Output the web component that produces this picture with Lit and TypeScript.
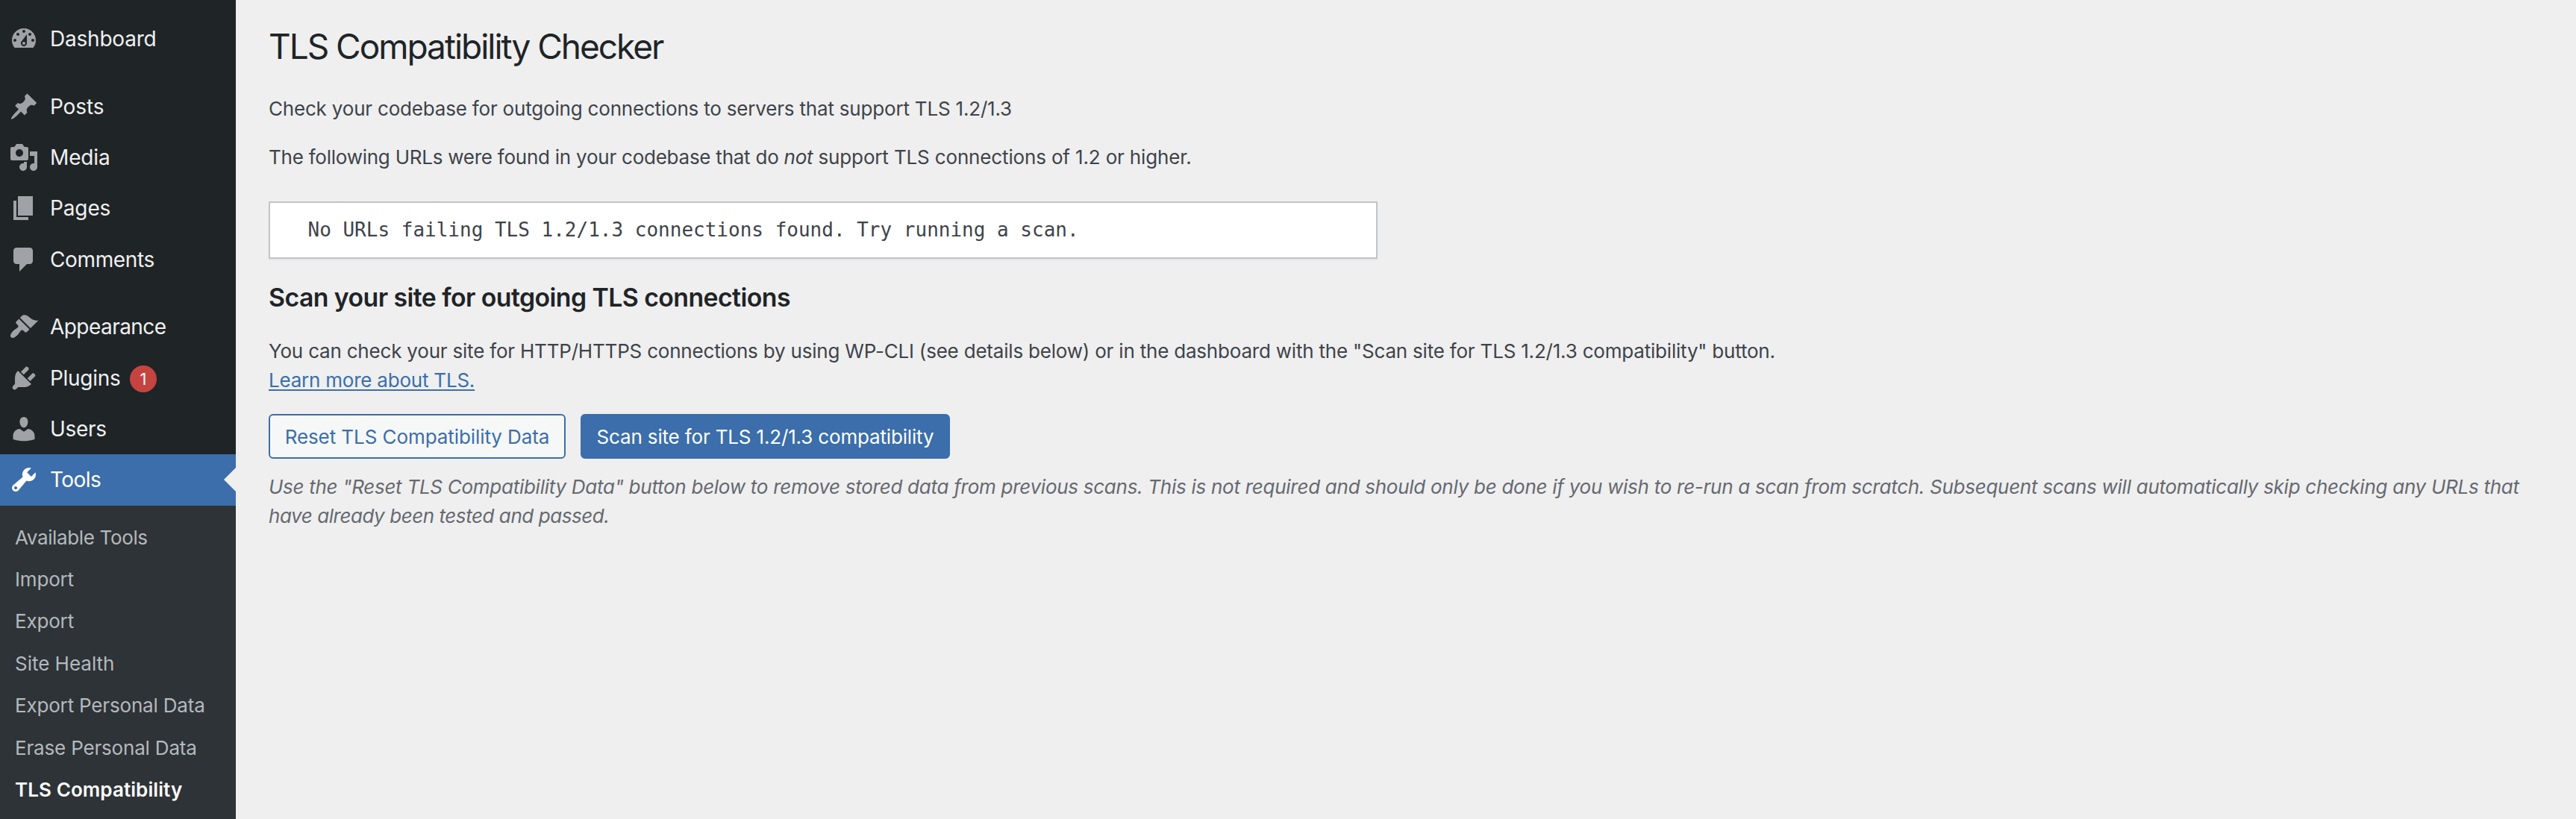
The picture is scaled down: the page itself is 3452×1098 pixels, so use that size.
import { LitElement, html, css, svg, nothing } from "lit";
import { customElement } from "lit/decorators.js";

interface MenuItem {
  label: string;
  icon: string;
  cls: string;
  count?: number;
  current?: boolean;
}

const ICONS: Record<string, string> = {
  dashboard:
    "M3.76 16h12.48c1.1-1.37 1.76-3.11 1.76-5 0-4.42-3.58-8-8-8s-8 3.58-8 8c0 1.89.66 3.63 1.76 5zM10 4c.55 0 1 .45 1 1s-.45 1-1 1-1-.45-1-1 .45-1 1-1zM6 6c.55 0 1 .45 1 1s-.45 1-1 1-1-.45-1-1 .45-1 1-1zm8 0c.55 0 1 .45 1 1s-.45 1-1 1-1-.45-1-1 .45-1 1-1zm-5.37 5.55L12 7v6c0 1.1-.9 2-2 2s-2-.9-2-2c0-.57.24-1.08.63-1.45zM4 10c.55 0 1 .45 1 1s-.45 1-1 1-1-.45-1-1 .45-1 1-1zm12 0c.55 0 1 .45 1 1s-.45 1-1 1-1-.45-1-1 .45-1 1-1zm-5 3c0-.55-.45-1-1-1s-1 .45-1 1 .45 1 1 1 1-.45 1-1z",
  post: "M10.44 3.02l1.82-1.82 6.36 6.35-1.83 1.82c-1.05-.68-2.48-.57-3.41.36l-.75.75c-.92.93-1.04 2.35-.35 3.41l-1.83 1.82-2.41-2.41-2.8 2.79c-.42.42-3.38 2.71-3.8 2.29s1.86-3.39 2.28-3.81l2.79-2.79L4.1 9.36l1.83-1.82c1.05.69 2.48.57 3.4-.36l.75-.75c.93-.92 1.05-2.35.36-3.41z",
  media:
    "M13 11V4c0-.55-.45-1-1-1h-1.67L9 1H5L3.67 3H2c-.55 0-1 .45-1 1v7c0 .55.45 1 1 1h10c.55 0 1-.45 1-1zM7 4.5c1.38 0 2.5 1.12 2.5 2.5S8.38 9.5 7 9.5 4.5 8.38 4.5 7 5.62 4.5 7 4.5zM14 6h5v10.5c0 1.38-1.12 2.5-2.5 2.5S14 17.88 14 16.5s1.12-2.5 2.5-2.5c.17 0 .34.02.5.05V9h-3V6zm-4 8.05V13h2v3.5c0 1.38-1.12 2.5-2.5 2.5S7 17.88 7 16.5 8.12 14 9.5 14c.17 0 .34.02.5.05z",
  page: "M6 15V2h10v13H6zm-1 1h8v2H3V5h2v11z",
  comments:
    "M5 2h9c1.1 0 2 .9 2 2v7c0 1.1-.9 2-2 2h-2l-5 5v-5H5c-1.1 0-2-.9-2-2V4c0-1.1.9-2 2-2z",
  appearance:
    "M14.48 11.06L7.41 3.99l1.5-1.5c.5-.56 2.3-.47 3.51.32 1.21.8 1.43 1.28 2.91 2.1 1.18.64 2.45 1.26 4.45.85zm-.71.71L6.7 4.7 4.93 6.47c-.39.39-.39 1.02 0 1.41l1.06 1.06c.39.39.39 1.03 0 1.42-.6.6-1.43 1.11-2.21 1.69-.35.26-.7.53-1.01.84C1.43 14.23.4 16.08 1.4 17.07c.99 1 2.84-.03 4.18-1.36.31-.31.58-.66.85-1.02.57-.78 1.08-1.61 1.69-2.21.39-.39 1.02-.39 1.41 0l1.06 1.06c.39.39 1.02.39 1.41 0z",
  plugins:
    "M13.11 4.36L9.87 7.6 8 5.73l3.24-3.24c.35-.34 1.05-.2 1.56.32.52.51.66 1.21.31 1.55zm-8 1.77l.91-1.12 9.01 9.01-1.19.84c-.71.71-2.63 1.16-3.82 1.16H6.14L4.9 17.26c-.59.59-1.54.59-2.12 0-.59-.58-.59-1.53 0-2.12l1.24-1.24v-3.88c0-1.13.4-3.19 1.09-3.89zm7.26 3.97l3.24-3.24c.34-.35 1.04-.21 1.55.31.52.51.66 1.21.31 1.55l-3.24 3.25z",
  users:
    "M10 9.25c-2.27 0-2.73-3.44-2.73-3.44C7 4.02 7.82 2 9.97 2c2.16 0 2.98 2.02 2.71 3.81 0 0-.41 3.44-2.68 3.44zm0 2.57L12.72 10c2.39 0 4.52 2.33 4.52 4.53v2.49s-3.65 1.13-7.24 1.13c-3.65 0-7.24-1.13-7.24-1.13v-2.49c0-2.25 1.94-4.48 4.47-4.48z",
  tools:
    "M16.68 9.77c-1.34 1.34-3.3 1.67-4.95.99l-5.41 6.52c-.99.99-2.59.99-3.58 0s-.99-2.59 0-3.57l6.52-5.42c-.68-1.65-.35-3.61.99-4.95 1.28-1.28 3.12-1.62 4.72-1.06l-2.89 2.89 2.82 2.82 2.86-2.87c.53 1.58.18 3.39-1.08 4.65zM3.81 16.21c.4.39 1.04.39 1.43 0 .4-.4.4-1.04 0-1.43-.39-.4-1.03-.4-1.43 0-.39.39-.39 1.03 0 1.43z",
};

const GROUPS: MenuItem[][] = [
  [{ label: "Dashboard", icon: "dashboard", cls: "t-dashboard" }],
  [
    { label: "Posts", icon: "post", cls: "t-posts" },
    { label: "Media", icon: "media", cls: "t-posts" },
    { label: "Pages", icon: "page", cls: "t-posts" },
    { label: "Comments", icon: "comments", cls: "t-comments" },
  ],
  [
    { label: "Appearance", icon: "appearance", cls: "t-appearance" },
    { label: "Plugins", icon: "plugins", cls: "t-plugins", count: 1 },
    { label: "Users", icon: "users", cls: "t-plugins" },
    { label: "Tools", icon: "tools", cls: "t-appearance", current: true },
  ],
];

const SUBMENU: { label: string; cls: string }[] = [
  { label: "Available Tools", cls: "s-available" },
  { label: "Import", cls: "" },
  { label: "Export", cls: "" },
  { label: "Site Health", cls: "s-health" },
  { label: "Export Personal Data", cls: "" },
  { label: "Erase Personal Data", cls: "" },
  { label: "TLS Compatibility", cls: "s-active" },
];

@customElement("app-root")
export class AppRoot extends LitElement {
  static styles = css`
    :host {
      display: flex;
      height: 1098px;
      overflow: hidden;
      background: #efefef;
      color: #3e434a;
      font-family: Inter, "Liberation Sans", sans-serif;
      font-size: 26px;
      line-height: 39px;
    }
    a { color: inherit; text-decoration: none; }
    .sidebar {
      flex: none;
      width: 316px;
      background: #1f2427;
      display: flex;
      flex-direction: column;
      padding-top: 18px;
      box-sizing: border-box;
    }
    .group { display: flex; flex-direction: column; margin-bottom: 22px; }
    .group.last { margin-bottom: 0; }
    .item {
      position: relative;
      display: flex;
      align-items: center;
      height: 68.4px;
      padding-left: 12px;
      color: #f0f0f0;
      font-size: 28px;
    }
    .icon { width: 40px; height: 40px; fill: #9fa2a7; margin-right: 15px; flex: none; }
    .label { padding-top: 1px; }
    .item.current { background: #3b6eab; color: #fff; }
    .item.current .icon { fill: #fff; }
    .item.current::after {
      content: "";
      position: absolute;
      right: 0;
      top: 18px;
      border: 16px solid transparent;
      border-left-width: 0;
      border-right-color: #efefef;
    }
    .count {
      width: 36px;
      height: 36px;
      border-radius: 50%;
      background: #c6443f;
      color: #fff;
      font-size: 22px;
      line-height: 36px;
      text-align: center;
      margin: 2px 0 0 12.5px;
    }
    .t-dashboard { letter-spacing: -0.21px; }
    .t-posts { letter-spacing: -0.13px; }
    .t-comments { letter-spacing: -0.36px; }
    .t-appearance { letter-spacing: -0.55px; }
    .t-plugins { letter-spacing: -0.29px; }
    .submenu {
      flex: 1;
      background: #2e3337;
      color: #b4b9bd;
      padding: 15px 0 0 20px;
      display: flex;
      flex-direction: column;
    }
    .sub { line-height: 56.4px; letter-spacing: -0.18px; }
    .s-available { letter-spacing: -0.36px; }
    .s-health { letter-spacing: -0.02px; }
    .s-active { color: #fff; font-weight: 600; letter-spacing: 0.09px; }
    .content {
      flex: 1;
      min-width: 0;
      padding: 31.5px 40px 0 44px;
      display: flex;
      flex-direction: column;
      align-items: flex-start;
    }
    h1, h2, p { margin: 0; }
    h1 {
      color: #1f2427;
      font-size: 46px;
      font-weight: 400;
      line-height: 60px;
      letter-spacing: -2.02px;
      margin-bottom: 34px;
    }
    .intro { letter-spacing: -0.19px; margin-bottom: 26px; }
    .found { letter-spacing: -0.24px; margin-bottom: 40.5px; }
    .rest { letter-spacing: -0.15px; }
    .results {
      box-sizing: border-box;
      width: 1486px;
      height: 77px;
      border: 2px solid #c2c3c7;
      background: #fff;
      box-shadow: 0 2px 2px rgba(0, 0, 0, 0.04);
      padding: 17px 50.5px;
      font-family: "DejaVu Sans Mono", monospace;
    }
    h2 {
      color: #1f2427;
      font-size: 33.8px;
      font-weight: 600;
      line-height: 47px;
      letter-spacing: -0.56px;
      margin: 28px 0 29px;
    }
    .how { letter-spacing: -0.2px; }
    .link {
      color: #3b6eab;
      letter-spacing: -0.22px;
      text-decoration: underline;
      text-decoration-thickness: 2px;
      text-underline-offset: 3px;
      text-decoration-skip-ink: none;
    }
    .actions { display: flex; gap: 20px; margin: 26px 0 18px; }
    .button {
      box-sizing: border-box;
      height: 60px;
      border: 2px solid #3b6eab;
      border-radius: 6px;
      padding: 1px 0 0;
      background: #f6f7f7;
      color: #3b6eab;
      font: inherit;
      line-height: 55px;
      letter-spacing: -0.08px;
      width: 398px;
    }
    .primary { background: #3b6eab; color: #fff; letter-spacing: -0.16px; width: 495px; }
    .description { color: #666970; font-style: italic; letter-spacing: -0.272px; }
    .tail { letter-spacing: -0.44px; }
  `;

  private renderItem(item: MenuItem) {
    return html`<a class="item ${item.current ? "current" : ""}">
      <svg class="icon" viewBox="0 0 20 20">${svg`<path fill-rule="evenodd" d=${ICONS[item.icon]}></path>`}</svg>
      <span class="label ${item.cls}">${item.label}</span>
      ${item.count ? html`<span class="count">${item.count}</span>` : nothing}
    </a>`;
  }

  render() {
    return html`
      <nav class="sidebar">
        ${GROUPS.map(
          (group, i) => html`<div class="group ${i === GROUPS.length - 1 ? "last" : ""}">
            ${group.map((item) => this.renderItem(item))}
          </div>`
        )}
        <div class="submenu">
          ${SUBMENU.map((s) => html`<a class="sub ${s.cls}">${s.label}</a>`)}
        </div>
      </nav>
      <main class="content">
        <h1>TLS Compatibility Checker</h1>
        <p class="intro">Check your codebase for outgoing connections to servers that support TLS 1.2/1.3</p>
        <p class="found">The following URLs were found in your codebase that do <em>not</em><span class="rest"> support TLS connections of 1.2 or higher.</span></p>
        <div class="results">No URLs failing TLS 1.2/1.3 connections found. Try running a scan.</div>
        <h2>Scan your site for outgoing TLS connections</h2>
        <p class="how">You can check your site for HTTP/HTTPS connections by using WP-CLI (see details below) or in the dashboard with the "Scan site for TLS 1.2/1.3 compatibility" button.<br /><a class="link">Learn more about TLS.</a></p>
        <div class="actions">
          <button class="button">Reset TLS Compatibility Data</button>
          <button class="button primary">Scan site for TLS 1.2/1.3 compatibility</button>
        </div>
        <p class="description">Use the "Reset TLS Compatibility Data" button below to remove stored data from previous scans. This is not required and should only be done if you wish to re-run a scan from scratch. Subsequent scans will automatically skip checking any URLs that <span class="tail">have already been tested and passed.</span></p>
      </main>
    `;
  }
}
